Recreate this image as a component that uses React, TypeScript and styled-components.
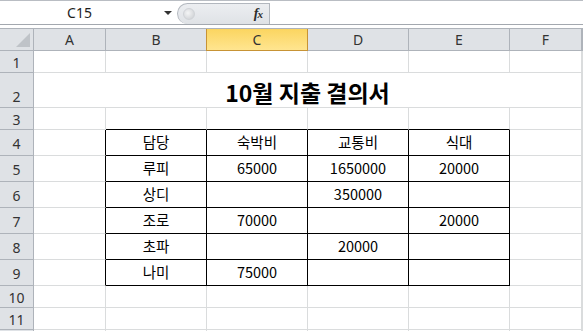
import { VFC } from 'react';
import styled, { createGlobalStyle } from 'styled-components';

const GRID = '#dadcdd';
const HEAD_LINE = '#aeb3ba';
const INK = '#000';
const SEL_LINE = '#c79335';

const GlobalStyle = createGlobalStyle`
  html, body {
    margin: 0;
    padding: 0;
    background: #fff;
  }
  body {
    font-family: "Noto Sans CJK KR", "Noto Sans", sans-serif;
  }
`;

const Page = styled.div`
  width: 583px;
  height: 331px;
  overflow: hidden;
  background: #fff;
`;

const FormulaBar = styled.div`
  display: flex;
  height: 23px;
  border-top: 1px solid #b9bdc3;
  border-bottom: 1px solid #a3a8af;
`;

const NameBox = styled.div`
  position: relative;
  width: 177px;
  display: flex;
  align-items: center;
  justify-content: center;
  padding-right: 18px;
  box-sizing: border-box;
  font-family: "Noto Sans", sans-serif;
  font-size: 14px;
  color: #1e1e1e;
  background: #fff;

  .arrow {
    position: absolute;
    right: 5px;
    top: 10px;
    width: 0;
    height: 0;
    border-left: 4px solid transparent;
    border-right: 4px solid transparent;
    border-top: 4px solid #333;
  }
`;

const FxArea = styled.div`
  display: flex;
  align-items: center;
  justify-content: space-between;
  width: 93px;
  margin-top: 2px;
  padding: 0 7px 0 5px;
  box-sizing: border-box;
  background: linear-gradient(#eceef1, #dfe2e6);
  border: 1px solid #b2b7be;
  border-bottom: none;
  border-top-left-radius: 11px;
  border-bottom-left-radius: 11px;

  .dot {
    width: 10px;
    height: 10px;
    border-radius: 50%;
    background: radial-gradient(circle at 40% 40%, #f4f5f6, #c9ccd0);
    border: 1px solid #d0d3d7;
  }

  .fx {
    font-family: "Liberation Serif", serif;
    font-style: italic;
    font-weight: bold;
    font-size: 14px;
    color: #2c2c2c;
    letter-spacing: -1px;

    small {
      font-size: 11px;
    }
  }
`;

const FormulaInput = styled.div`
  flex: 1;
  background: #fff;
`;

const Spacer = styled.div`
  height: 3px;
  background: #fff;
`;

const Sheet = styled.div`
  display: grid;
  grid-template-columns: 34px 72px 101px 101px 101px 101px 72px 1fr;
  grid-template-rows: 22px 22px 35px 22px repeat(6, 26px) 22px 22px 22px;
  border-top: 1px solid ${HEAD_LINE};
`;

const Corner = styled.div`
  position: relative;
  background: #dfe2e6;
  border-right: 1px solid ${HEAD_LINE};
  border-bottom: 1px solid ${HEAD_LINE};

  svg {
    position: absolute;
    left: 16px;
    top: 4px;
  }
`;

const ColHead = styled.div<{ $selected?: boolean }>`
  display: flex;
  align-items: center;
  justify-content: center;
  font-family: "Noto Sans", sans-serif;
  font-size: 14px;
  color: #333;
  background: ${p => (p.$selected ? 'linear-gradient(#fbd560, #ffe590)' : '#dfe2e6')};
  border-right: 1px solid ${p => (p.$selected ? SEL_LINE : HEAD_LINE)};
  border-bottom: 1px solid ${p => (p.$selected ? SEL_LINE : HEAD_LINE)};
  box-shadow: ${p => (p.$selected ? `-1px 0 0 ${SEL_LINE}` : 'none')};
`;

const RowHead = styled.div`
  display: flex;
  align-items: center;
  justify-content: center;
  padding-top: 2px;
  box-sizing: border-box;
  font-family: "Noto Sans", sans-serif;
  font-size: 14px;
  color: #333;
  background: #dfe2e6;
  border-right: 1px solid ${HEAD_LINE};
  border-bottom: 1px solid ${HEAD_LINE};

  &.tall {
    align-items: flex-end;
    padding-bottom: 1px;
  }
`;

const Cell = styled.div<{ $right?: string; $bottom?: string }>`
  display: flex;
  align-items: center;
  justify-content: center;
  font-size: 14.5px;
  line-height: 1;
  color: #000;
  border-right: 1px solid ${p => p.$right || GRID};
  border-bottom: 1px solid ${p => p.$bottom || GRID};
`;

const Title = styled.div`
  grid-column: 2 / span 6;
  display: flex;
  align-items: flex-end;
  justify-content: center;
  padding-bottom: 3px;
  box-sizing: border-box;
  font-size: 23px;
  font-weight: bold;
  line-height: 1;
  color: #000;
  border-right: 1px solid ${GRID};
  border-bottom: 1px solid ${GRID};
`;

const COLS = ['A', 'B', 'C', 'D', 'E', 'F', 'G'];

const TABLE: string[][] = [
  ['담당', '숙박비', '교통비', '식대'],
  ['루피', '65000', '1650000', '20000'],
  ['상디', '', '350000', ''],
  ['조로', '70000', '', '20000'],
  ['초파', '', '20000', ''],
  ['나미', '75000', '', ''],
];

// 표 범위 B4:E9 (행 4~9, 열 B~E)
const cellText = (row: number, col: number) => {
  if (row >= 4 && row <= 9 && col >= 1 && col <= 4) return TABLE[row - 4][col - 1];
  return '';
};

type RowProps = { row: number };

const SheetRow: VFC<RowProps> = ({ row }) => {
  if (row === 2) {
    return (
      <>
        <RowHead className="tall">2</RowHead>
        <Title>10월 지출 결의서</Title>
        <Cell />
      </>
    );
  }
  const inTable = row >= 4 && row <= 9;
  return (
    <>
      {/* 12행은 화면 밖으로 잘려 번호가 보이지 않음 */}
      <RowHead>{row < 12 ? row : ''}</RowHead>
      {COLS.map((_, col) => {
        const right = inTable && col <= 4 ? INK : undefined;
        const bottom = row >= 3 && row <= 9 && col >= 1 && col <= 4 ? INK : undefined;
        return (
          <Cell key={col} $right={right} $bottom={bottom}>
            {cellText(row, col)}
          </Cell>
        );
      })}
    </>
  );
};

const App: VFC = () => (
  <Page>
    <GlobalStyle />
    <FormulaBar>
      <NameBox>
        C15
        <span className="arrow" />
      </NameBox>
      <FxArea>
        <span className="dot" />
        <span className="fx">
          f<small>x</small>
        </span>
      </FxArea>
      <FormulaInput />
    </FormulaBar>
    <Spacer />
    <Sheet>
      <Corner>
        <svg width="14" height="14" viewBox="0 0 14 14">
          <polygon points="14,0 14,14 0,14" fill="#bfc3c8" />
        </svg>
      </Corner>
      {COLS.map(c => (
        <ColHead key={c} $selected={c === 'C'}>
          {c === 'G' ? '' : c}
        </ColHead>
      ))}
      {Array.from({ length: 12 }, (_, i) => (
        <SheetRow key={i + 1} row={i + 1} />
      ))}
    </Sheet>
  </Page>
);

export default App;
